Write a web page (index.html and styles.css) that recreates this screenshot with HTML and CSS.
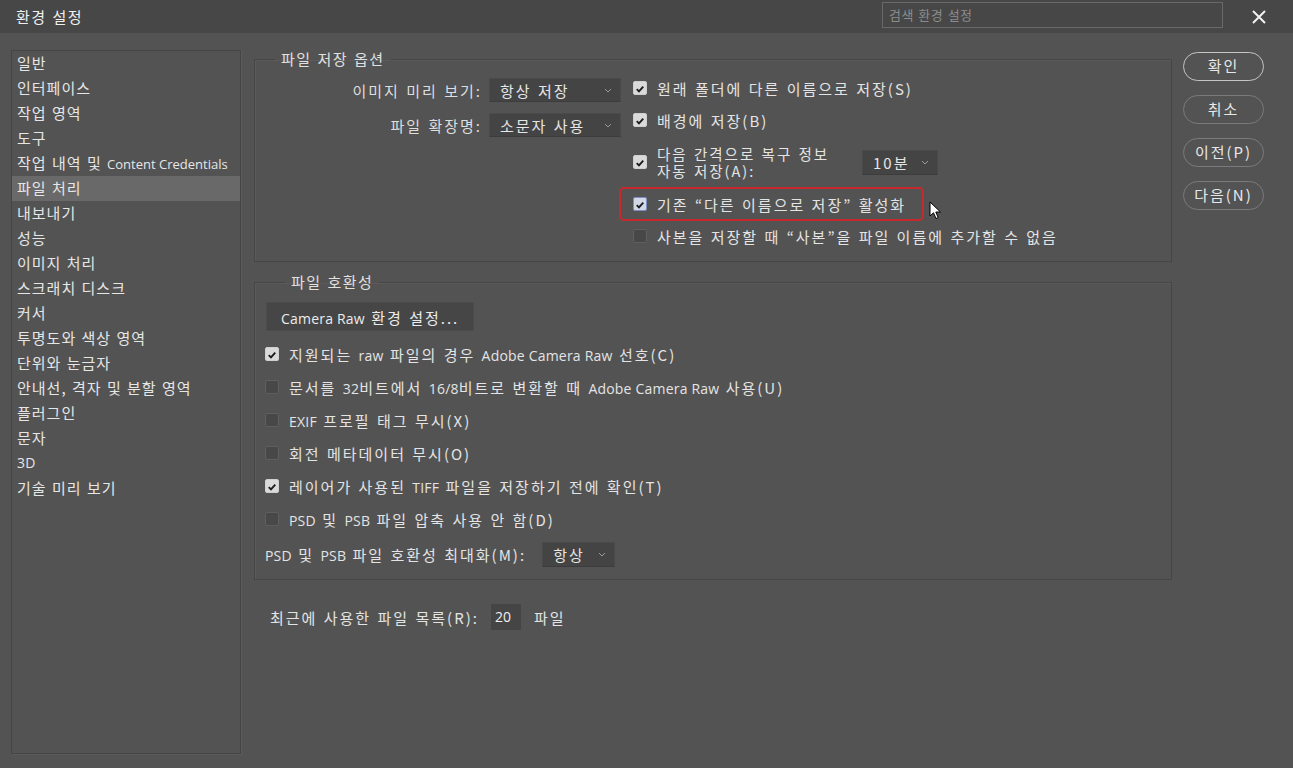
FILE: index.html
```html
<html>
  <head>
    <meta charset="utf-8" />
    <link rel="stylesheet" href="styles.css">
  </head>
  <body>
    <div class="titlebar">
      <span class="title">환경 설정</span>
      <div class="search">검색 환경 설정</div>
      <svg class="close" width="16" height="16" viewBox="0 0 16 16">
        <path d="M2 2 L14 14 M14 2 L2 14" stroke="#f2f2f2" stroke-width="2" fill="none" />
      </svg>
    </div>

    <div class="main">
      <ul class="nav">
        <li>일반</li>
        <li>인터페이스</li>
        <li>작업 영역</li>
        <li>도구</li>
        <li>작업 내역 및 <span class="lat">Content Credentials</span></li>
        <li class="selected">파일 처리</li>
        <li>내보내기</li>
        <li>성능</li>
        <li>이미지 처리</li>
        <li>스크래치 디스크</li>
        <li>커서</li>
        <li>투명도와 색상 영역</li>
        <li>단위와 눈금자</li>
        <li>안내선, 격자 및 분할 영역</li>
        <li>플러그인</li>
        <li>문자</li>
        <li class="lat">3D</li>
        <li>기술 미리 보기</li>
      </ul>

      <div class="content">
        <fieldset class="group save-group">
          <legend>파일 저장 옵션</legend>
          <div class="save-body">
            <div class="fields">
              <label>이미지 미리 보기:</label>
              <div class="select">항상 저장<svg class="chev" width="8" height="5" viewBox="0 0 8 5"><path d="M1 1 L4 4 L7 1" stroke="#9a9a9a" fill="none" /></svg></div>
              <label>파일 확장명:</label>
              <div class="select">소문자 사용<svg class="chev" width="8" height="5" viewBox="0 0 8 5"><path d="M1 1 L4 4 L7 1" stroke="#9a9a9a" fill="none" /></svg></div>
            </div>
            <div class="checks">
              <div class="chk"><span class="box on"><svg width="14" height="14" viewBox="0 0 14 14"><path d="M3.2 7.2 L5.8 9.8 L10.8 4.2" stroke="#1c1c1c" stroke-width="2.2" fill="none" /></svg></span><span class="txt">원래 폴더에 다른 이름으로 저장(S)</span></div>
              <div class="chk"><span class="box on"><svg width="14" height="14" viewBox="0 0 14 14"><path d="M3.2 7.2 L5.8 9.8 L10.8 4.2" stroke="#1c1c1c" stroke-width="2.2" fill="none" /></svg></span><span class="txt">배경에 저장(B)</span></div>
              <div class="chk two-line">
                <span class="box on"><svg width="14" height="14" viewBox="0 0 14 14"><path d="M3.2 7.2 L5.8 9.8 L10.8 4.2" stroke="#1c1c1c" stroke-width="2.2" fill="none" /></svg></span>
                <span class="two-text"><span class="line">다음 간격으로 복구 정보</span><span class="line">자동 저장(A):</span></span>
                <div class="select small">10분<svg class="chev" width="8" height="5" viewBox="0 0 8 5"><path d="M1 1 L4 4 L7 1" stroke="#9a9a9a" fill="none" /></svg></div>
              </div>
              <div class="chk-line">
                <div class="chk highlight"><span class="box on focus"><svg width="14" height="14" viewBox="0 0 14 14"><path d="M3.2 7.2 L5.8 9.8 L10.8 4.2" stroke="#1c1c1c" stroke-width="2.2" fill="none" /></svg></span><span class="txt">기존 “다른 이름으로 저장” 활성화</span></div>
                <svg class="cursor" width="13" height="19" viewBox="0 0 13 19">
                  <path d="M1 1 L1 15 L4.5 11.8 L7 17.5 L9.2 16.5 L6.8 11 L11.5 11 Z" fill="#ffffff" stroke="#000000" stroke-width="1" stroke-linejoin="round" />
                </svg>
              </div>
              <div class="chk"><span class="box"></span><span class="txt">사본을 저장할 때 “사본”을 파일 이름에 추가할 수 없음</span></div>
            </div>
          </div>
        </fieldset>

        <fieldset class="group compat-group">
          <legend>파일 호환성</legend>
          <div class="btn-raw"><span class="lat">Camera Raw</span> 환경 설정...</div>
          <div class="compat-list">
            <div class="chk"><span class="box on"><svg width="14" height="14" viewBox="0 0 14 14"><path d="M3.2 7.2 L5.8 9.8 L10.8 4.2" stroke="#1c1c1c" stroke-width="2.2" fill="none" /></svg></span><span class="txt">지원되는 <span class="lat">raw</span> 파일의 경우 <span class="lat">Adobe Camera Raw</span> 선호(C)</span></div>
            <div class="chk"><span class="box"></span><span class="txt">문서를 <span class="lat">32</span>비트에서 <span class="lat">16/8</span>비트로 변환할 때 <span class="lat">Adobe Camera Raw</span> 사용(U)</span></div>
            <div class="chk"><span class="box"></span><span class="txt"><span class="lat">EXIF</span> 프로필 태그 무시(X)</span></div>
            <div class="chk"><span class="box"></span><span class="txt">회전 메타데이터 무시(O)</span></div>
            <div class="chk"><span class="box on"><svg width="14" height="14" viewBox="0 0 14 14"><path d="M3.2 7.2 L5.8 9.8 L10.8 4.2" stroke="#1c1c1c" stroke-width="2.2" fill="none" /></svg></span><span class="txt">레이어가 사용된 <span class="lat">TIFF</span> 파일을 저장하기 전에 확인(T)</span></div>
            <div class="chk"><span class="box"></span><span class="txt"><span class="lat">PSD</span> 및 <span class="lat">PSB</span> 파일 압축 사용 안 함(D)</span></div>
          </div>
          <div class="max-row">
            <label><span class="lat">PSD</span> 및 <span class="lat">PSB</span> 파일 호환성 최대화(M):</label>
            <div class="select tiny">항상<svg class="chev" width="8" height="5" viewBox="0 0 8 5"><path d="M1 1 L4 4 L7 1" stroke="#9a9a9a" fill="none" /></svg></div>
          </div>
        </fieldset>

        <div class="recent-row">
          <label>최근에 사용한 파일 목록(R):</label>
          <div class="num-input">20</div>
          <span>파일</span>
        </div>
      </div>

      <div class="buttons">
        <div class="btn primary">확인</div>
        <div class="btn">취소</div>
        <div class="btn">이전(P)</div>
        <div class="btn">다음(N)</div>
      </div>
    </div>
  </body>
</html>
```

FILE: styles.css
```css
body {
  margin: 0;
  background: #535353;
  color: #e4e4e4;
  font-family: "Noto Sans CJK KR", "Noto Sans", sans-serif;
  font-size: 15px;
  letter-spacing: 2px;
  word-spacing: 1px;
  overflow: hidden;
}
.lat {
  font-family: "Open Sans", "Noto Sans", sans-serif;
  letter-spacing: 0.2px;
  word-spacing: 0;
  font-size: 14px;
}

/* title bar */
.titlebar {
  height: 33px;
  background: #474747;
  display: flex;
  align-items: center;
  padding: 0 0 0 16px;
  box-sizing: border-box;
}
.title {
  color: #f0f0f0;
  font-size: 15px;
  letter-spacing: 1.5px;
}
.search {
  margin-left: auto;
  width: 341px;
  height: 26px;
  box-sizing: border-box;
  border: 1px solid #696969;
  color: #8c8c8c;
  font-size: 13px;
  line-height: 24px;
  padding-left: 6px;
  letter-spacing: 0.5px;
  margin-top: -4px;
}
.close {
  margin: 0 26px 0 28px;
}

/* layout */
.main {
  display: flex;
  align-items: flex-start;
}
.nav {
  list-style: none;
  margin: 17px 0 0 11px;
  padding: 0;
  width: 230px;
  height: 704px;
  box-sizing: border-box;
  border: 1px solid #454545;
  box-shadow: 1px 1px 0 #5b5b5b;
  letter-spacing: 1px;
}
.nav li {
  height: 25px;
  line-height: 23px;
  padding-left: 5px;
  color: #e6e6e6;
  white-space: nowrap;
}
.nav li .lat {
  font-size: 13px;
  letter-spacing: 0;
}
.nav li.selected {
  background: #696969;
}
.content {
  margin: 16px 0 0 13px;
  width: 918px;
}

/* groups */
.group {
  margin: 0;
  padding: 9px 0 15px 0;
  border: 1px solid #464646;
  box-shadow: inset 1px 1px 0 #5a5a5a;
  min-width: 0;
}
.group legend {
  margin-left: 20px;
  padding: 0 6px;
  line-height: 20px;
  color: #e0e0e0;
  letter-spacing: 1.5px;
}
.save-body {
  display: flex;
  align-items: flex-start;
}
.fields {
  display: grid;
  grid-template-columns: 227px 132px;
  column-gap: 7px;
  row-gap: 11px;
  align-items: center;
}
.fields label {
  text-align: right;
  color: #dedede;
}
.select {
  height: 24px;
  box-sizing: border-box;
  background: #444444;
  border: 1px solid #4a4a4a;
  border-bottom-color: #3c3c3c;
  padding: 0 8px 0 10px;
  display: flex;
  align-items: center;
  justify-content: space-between;
  color: #e6e6e6;
  white-space: nowrap;
}
.select.small {
  width: 76px;
  height: 25px;
}
.select.tiny {
  width: 73px;
  height: 25px;
}
.checks {
  margin-left: 12px;
  display: flex;
  flex-direction: column;
  gap: 12px;
}
.chk {
  display: flex;
  align-items: center;
  height: 20px;
  white-space: nowrap;
}
.box {
  width: 14px;
  height: 14px;
  box-sizing: border-box;
  border-radius: 2px;
  background: #484848;
  border: 1px solid #5f5f5f;
  margin-right: 10px;
  flex-shrink: 0;
  display: flex;
}
.box.on {
  background: #dadada;
  border-color: #cfcfcf;
}
.box.focus {
  background: #d3d8e6;
  border-color: #7f8fc2;
}
.chk.two-line {
  height: 36px;
  margin: 2px 0;
}
.two-text {
  display: flex;
  flex-direction: column;
  width: 195px;
  margin-right: 10px;
}
.two-text .line {
  height: 17px;
  line-height: 17px;
  font-size: 14.5px;
}
.chk-line {
  display: flex;
  align-items: center;
}
.chk.highlight {
  height: 30px;
  padding: 0 16px 0 12px;
  margin: -7px 0 -7px -14px;
  border: 2px solid #c8292c;
  border-radius: 5px;
}
.cursor {
  margin: 6px 0 -6px 5px;
}

/* compat group */
.compat-group {
  margin-top: 10px;
  padding: 10px 0 12px 10px;
}
.btn-raw {
  display: inline-block;
  height: 29px;
  line-height: 29px;
  box-sizing: border-box;
  padding: 0 14px;
  margin-left: 1px;
  background: #464646;
  border: 1px solid #4c4c4c;
  color: #ececec;
}
.compat-list {
  margin-top: 13px;
  display: flex;
  flex-direction: column;
  gap: 13px;
}
.max-row {
  display: flex;
  align-items: center;
  margin-top: 13px;
  gap: 16px;
}
.recent-row {
  display: flex;
  align-items: center;
  margin: 24px 0 0 16px;
}
.num-input {
  width: 30px;
  height: 26px;
  box-sizing: border-box;
  background: #454545;
  line-height: 26px;
  padding-left: 4px;
  margin: 0 13px 0 12px;
  color: #f0f0f0;
  font-family: "Open Sans", sans-serif;
  font-size: 14px;
  letter-spacing: 0;
}

/* buttons */
.buttons {
  margin: 19px 0 0 11px;
  display: flex;
  flex-direction: column;
  gap: 14px;
}
.btn {
  width: 81px;
  height: 29px;
  box-sizing: border-box;
  border: 1.5px solid #7b7b7b;
  border-radius: 15px;
  text-align: center;
  line-height: 26px;
  color: #e8e8e8;
}
.btn.primary {
  border-color: #c4c4c4;
}
```
